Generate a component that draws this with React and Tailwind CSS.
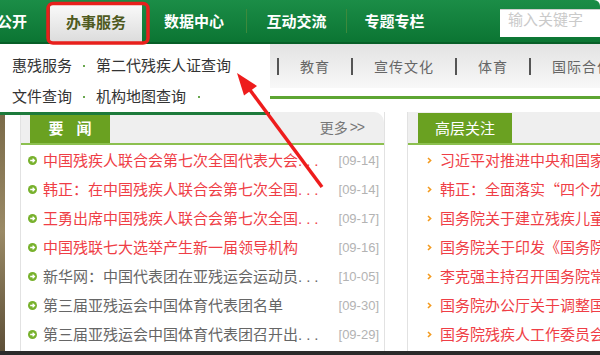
const navItems = [
  { label: "数据中心", w: "w-[104px]" },
  { label: "互动交流", w: "w-[99px]" },
  { label: "专题专栏", w: "w-[95px]" },
];

const subNav = ["教育", "宣传文化", "体育", "国际合作"];

const news = [
  { t: "中国残疾人联合会第七次全国代表大会", cut: true, d: "09-14", hot: true },
  { t: "韩正：在中国残疾人联合会第七次全国", cut: true, d: "09-14", hot: true },
  { t: "王勇出席中国残疾人联合会第七次全国", cut: true, d: "09-17", hot: true },
  { t: "中国残联七大选举产生新一届领导机构", cut: false, d: "09-16", hot: true },
  { t: "新华网：中国代表团在亚残运会运动员", cut: true, d: "10-05", hot: false },
  { t: "第三届亚残运会中国体育代表团名单", cut: false, d: "09-30", hot: false },
  { t: "第三届亚残运会中国体育代表团召开出", cut: true, d: "09-29", hot: false },
];

const focus = [
  "习近平对推进中央和国家机关党的建设作出重要指示",
  "韩正：全面落实“四个办好”工作要求",
  "国务院关于建立残疾儿童康复救助制度的意见",
  "国务院关于印发《国务院残疾人工作规划》的通知",
  "李克强主持召开国务院常务会议",
  "国务院办公厅关于调整国务院残疾人工作委员会",
  "国务院残疾人工作委员会会议召开",
];

const GreenBullet = () => (
  <svg width="9" height="9" viewBox="0 0 9 9" className="shrink-0">
    <circle cx="4.5" cy="4.5" r="4.5" fill="#78b12d" />
    <path d="M2.2 4.5h4.2M4.6 2.6l1.9 1.9-1.9 1.9" stroke="#fff" strokeWidth="1.3" fill="none" />
  </svg>
);

const OrangeBullet = () => (
  <svg width="5" height="7" viewBox="0 0 5 7" className="shrink-0">
    <path d="M1 1l2.6 2.5L1 6" stroke="#f39a1e" strokeWidth="1.6" fill="none" />
  </svg>
);

const TopNav = () => (
  <div className="flex h-[44px] rounded-tr-[6px] border-b-[2px] border-[#075f28] bg-gradient-to-b from-[#1b8d47] to-[#0b7533] text-[15px] font-bold text-white">
    <div className="flex w-[50px] items-center overflow-hidden whitespace-nowrap">
      <span className="ml-[-33px]">政务公开</span>
    </div>
    <div className="mt-[3px] flex h-[39px] w-[92px] items-center justify-center rounded-t-[2px] bg-gradient-to-b from-[#fbfbfb] to-[#dcdcdc] text-[#4f5a20]">
      办事服务
    </div>
    {navItems.map((item, i) => (
      <div key={item.label} className="flex items-center">
        {i > 0 && <div className="h-[24px] w-px bg-[#3d8a3c]" />}
        <div className={`${item.w} text-center`}>{item.label}</div>
      </div>
    ))}
    <div className="ml-auto mt-[9px] h-[28px] w-[100px] border-t border-[#cfcfcf] bg-white pl-[8px] text-[15px] font-normal leading-[18px] text-[#cacaca]">
      输入关键字
    </div>
  </div>
);

const SubNav = () => (
  <div>
    <div className="flex h-[44px] items-center gap-[21px] whitespace-nowrap bg-gradient-to-b from-[#e3e3e3] to-[#f8f8f8] pl-[277px] text-[14px] tracking-[1px] text-[#666]">
      {subNav.map((s) => (
        <div key={s} className="flex items-center gap-[21px]">
          <span className="h-[17px] w-[2px] bg-[#555]" />
          <span>{s}</span>
        </div>
      ))}
    </div>
    <div className="h-[8px]" />
    <div className="h-[3px] bg-[#5da532]" />
    <div className="h-[13px]" />
  </div>
);

const Dropdown = () => (
  <div className="absolute left-0 top-[44px] h-[71px] w-[270px] border-b-[3px] border-[#1d7a3b] bg-white pl-[12px] pt-[6px] text-[15px] text-[#333]">
    <div className="flex h-[31px] items-center">
      <span>惠残服务</span>
      <span className="mx-[11px] h-[2px] w-[2px] bg-[#6aa84f]" />
      <span>第二代残疾人证查询</span>
    </div>
    <div className="flex h-[31px] items-center">
      <span>文件查询</span>
      <span className="mx-[11px] h-[2px] w-[2px] bg-[#6aa84f]" />
      <span>机构地图查询</span>
      <span className="ml-[12px] h-[2px] w-[2px] bg-[#6aa84f]" />
    </div>
  </div>
);

const NewsPanel = () => (
  <div className="flex w-[365px] flex-col border-x border-[#e2e2e2]">
    <div className="flex h-[31px] items-stretch rounded-tr-[10px] bg-[#efefef]">
      <div className="ml-[9px] mt-[1px] flex w-[80px] items-center justify-center gap-[13px] bg-[#6aa121] text-[15px] font-bold text-white">
        <span>要</span>
        <span>闻</span>
      </div>
      <div className="ml-auto mr-[20px] flex items-center text-[14px] text-[#777]">
        更多<span className="ml-[2px] font-['Liberation_Sans',sans-serif] tracking-[-1px]">&gt;&gt;</span>
      </div>
    </div>
    <div className="h-[2px] bg-[#8cc04f]" />
    <div className="pt-[1px]">
      {news.map((n) => (
        <div key={n.t} className="flex h-[29px] items-center pl-[7px] pr-[5px]">
          <GreenBullet />
          <div className={`ml-[6px] flex-1 overflow-hidden whitespace-nowrap text-[15px] ${n.hot ? "text-[#ef3e46]" : "text-[#666]"}`}>
            {n.t}
            {n.cut && <span className="font-['Liberation_Sans',sans-serif] tracking-[4px]">...</span>}
          </div>
          <span className="font-['Liberation_Sans',sans-serif] text-[13px] text-[#b3b3b3]">[{n.d}]</span>
        </div>
      ))}
    </div>
  </div>
);

const FocusPanel = () => (
  <div className="flex flex-1 flex-col overflow-hidden border-l border-[#e2e2e2]">
    <div className="flex h-[31px] bg-[#efefef]">
      <div className="ml-[10px] mt-[1px] flex w-[94px] items-center justify-center bg-[#6aa121] text-[15px] text-white">
        高层关注
      </div>
    </div>
    <div className="h-[2px] bg-[#8cc04f]" />
    <div className="pt-[1px]">
      {focus.map((t) => (
        <div key={t} className="flex h-[29px] items-center pl-[19px]">
          <OrangeBullet />
          <div className="ml-[8px] overflow-hidden whitespace-nowrap text-[15px] text-[#ef3e46]">{t}</div>
        </div>
      ))}
    </div>
  </div>
);

const Annotation = () => (
  <svg className="pointer-events-none absolute left-0 top-0" width="600" height="355">
    <rect x="48" y="3.5" width="100" height="39.5" rx="5" fill="none" stroke="#e8201c" strokeWidth="3.5" />
    <line x1="322" y1="187" x2="250" y2="90" stroke="#ee1c1c" strokeWidth="3.5" />
    <polygon points="237,73 257,86 244,95.5" fill="#ee1c1c" />
  </svg>
);

export default function App() {
  return (
    <div className="relative h-[355px] w-[600px] overflow-hidden bg-white font-['Noto_Sans_CJK_SC',sans-serif]">
      <TopNav />
      <SubNav />
      <div className="flex h-[239px]">
        <div className="w-[5px] bg-gradient-to-b from-[#7a6a48] via-[#9a8a66] to-[#5e5038]" />
        <div className="w-[15px]" />
        <NewsPanel />
        <div className="w-[22px]" />
        <FocusPanel />
      </div>
      <div className="h-[4px] bg-[#2b2b2b]" />
      <Dropdown />
      <Annotation />
    </div>
  );
}
